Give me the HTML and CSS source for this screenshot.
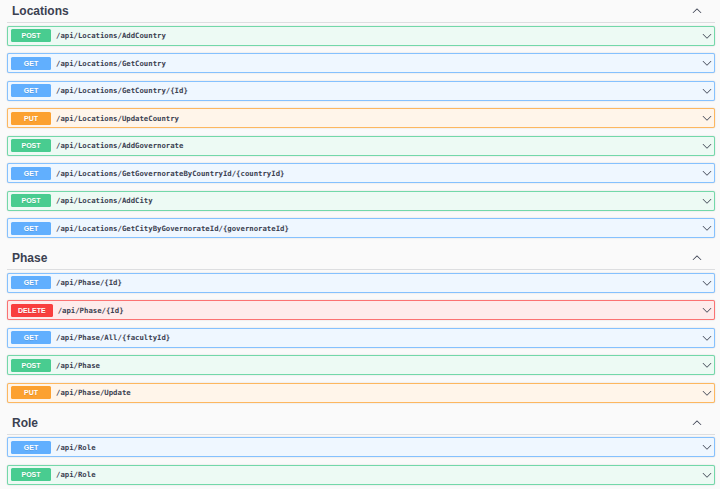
FILE: index.html
```html
<!DOCTYPE html>
<html>
<head>
<meta charset="utf-8">
<link rel="stylesheet" href="styles.css">
</head>
<body>
<div class="wrapper">
  <section class="tag-section">
    <h3 class="tag"><span class="tag-name">Locations</span><svg class="tag-arrow" viewBox="0 0 20 20"><path d="M17.418 13.891c.272.268.709.268.979 0s.271-.701 0-.969l-7.908-7.83c-.27-.268-.707-.268-.979 0l-7.908 7.83c-.27.268-.27.701 0 .969.271.268.709.268.979 0L10 6.75l7.418 7.141z"/></svg></h3>
    <div class="op op-post"><span class="method">POST</span><span class="path">/api/Locations/AddCountry</span><svg class="arrow" viewBox="0 0 20 20"><path d="M17.418 6.109c.272-.268.709-.268.979 0s.271.701 0 .969l-7.908 7.83c-.27.268-.707.268-.979 0l-7.908-7.83c-.27-.268-.27-.701 0-.969.271-.268.709-.268.979 0L10 13.25l7.418-7.141z"/></svg></div>
    <div class="op op-get"><span class="method">GET</span><span class="path">/api/Locations/GetCountry</span><svg class="arrow" viewBox="0 0 20 20"><path d="M17.418 6.109c.272-.268.709-.268.979 0s.271.701 0 .969l-7.908 7.83c-.27.268-.707.268-.979 0l-7.908-7.83c-.27-.268-.27-.701 0-.969.271-.268.709-.268.979 0L10 13.25l7.418-7.141z"/></svg></div>
    <div class="op op-get"><span class="method">GET</span><span class="path">/api/Locations/GetCountry/{Id}</span><svg class="arrow" viewBox="0 0 20 20"><path d="M17.418 6.109c.272-.268.709-.268.979 0s.271.701 0 .969l-7.908 7.83c-.27.268-.707.268-.979 0l-7.908-7.83c-.27-.268-.27-.701 0-.969.271-.268.709-.268.979 0L10 13.25l7.418-7.141z"/></svg></div>
    <div class="op op-put"><span class="method">PUT</span><span class="path">/api/Locations/UpdateCountry</span><svg class="arrow" viewBox="0 0 20 20"><path d="M17.418 6.109c.272-.268.709-.268.979 0s.271.701 0 .969l-7.908 7.83c-.27.268-.707.268-.979 0l-7.908-7.83c-.27-.268-.27-.701 0-.969.271-.268.709-.268.979 0L10 13.25l7.418-7.141z"/></svg></div>
    <div class="op op-post"><span class="method">POST</span><span class="path">/api/Locations/AddGovernorate</span><svg class="arrow" viewBox="0 0 20 20"><path d="M17.418 6.109c.272-.268.709-.268.979 0s.271.701 0 .969l-7.908 7.83c-.27.268-.707.268-.979 0l-7.908-7.83c-.27-.268-.27-.701 0-.969.271-.268.709-.268.979 0L10 13.25l7.418-7.141z"/></svg></div>
    <div class="op op-get"><span class="method">GET</span><span class="path">/api/Locations/GetGovernorateByCountryId/{countryId}</span><svg class="arrow" viewBox="0 0 20 20"><path d="M17.418 6.109c.272-.268.709-.268.979 0s.271.701 0 .969l-7.908 7.83c-.27.268-.707.268-.979 0l-7.908-7.83c-.27-.268-.27-.701 0-.969.271-.268.709-.268.979 0L10 13.25l7.418-7.141z"/></svg></div>
    <div class="op op-post"><span class="method">POST</span><span class="path">/api/Locations/AddCity</span><svg class="arrow" viewBox="0 0 20 20"><path d="M17.418 6.109c.272-.268.709-.268.979 0s.271.701 0 .969l-7.908 7.83c-.27.268-.707.268-.979 0l-7.908-7.83c-.27-.268-.27-.701 0-.969.271-.268.709-.268.979 0L10 13.25l7.418-7.141z"/></svg></div>
    <div class="op op-get"><span class="method">GET</span><span class="path">/api/Locations/GetCityByGovernorateId/{governorateId}</span><svg class="arrow" viewBox="0 0 20 20"><path d="M17.418 6.109c.272-.268.709-.268.979 0s.271.701 0 .969l-7.908 7.83c-.27.268-.707.268-.979 0l-7.908-7.83c-.27-.268-.27-.701 0-.969.271-.268.709-.268.979 0L10 13.25l7.418-7.141z"/></svg></div>
  </section>
  <section class="tag-section">
    <h3 class="tag"><span class="tag-name">Phase</span><svg class="tag-arrow" viewBox="0 0 20 20"><path d="M17.418 13.891c.272.268.709.268.979 0s.271-.701 0-.969l-7.908-7.83c-.27-.268-.707-.268-.979 0l-7.908 7.83c-.27.268-.27.701 0 .969.271.268.709.268.979 0L10 6.75l7.418 7.141z"/></svg></h3>
    <div class="op op-get"><span class="method">GET</span><span class="path">/api/Phase/{Id}</span><svg class="arrow" viewBox="0 0 20 20"><path d="M17.418 6.109c.272-.268.709-.268.979 0s.271.701 0 .969l-7.908 7.83c-.27.268-.707.268-.979 0l-7.908-7.83c-.27-.268-.27-.701 0-.969.271-.268.709-.268.979 0L10 13.25l7.418-7.141z"/></svg></div>
    <div class="op op-delete"><span class="method">DELETE</span><span class="path">/api/Phase/{Id}</span><svg class="arrow" viewBox="0 0 20 20"><path d="M17.418 6.109c.272-.268.709-.268.979 0s.271.701 0 .969l-7.908 7.83c-.27.268-.707.268-.979 0l-7.908-7.83c-.27-.268-.27-.701 0-.969.271-.268.709-.268.979 0L10 13.25l7.418-7.141z"/></svg></div>
    <div class="op op-get"><span class="method">GET</span><span class="path">/api/Phase/All/{facultyId}</span><svg class="arrow" viewBox="0 0 20 20"><path d="M17.418 6.109c.272-.268.709-.268.979 0s.271.701 0 .969l-7.908 7.83c-.27.268-.707.268-.979 0l-7.908-7.83c-.27-.268-.27-.701 0-.969.271-.268.709-.268.979 0L10 13.25l7.418-7.141z"/></svg></div>
    <div class="op op-post"><span class="method">POST</span><span class="path">/api/Phase</span><svg class="arrow" viewBox="0 0 20 20"><path d="M17.418 6.109c.272-.268.709-.268.979 0s.271.701 0 .969l-7.908 7.83c-.27.268-.707.268-.979 0l-7.908-7.83c-.27-.268-.27-.701 0-.969.271-.268.709-.268.979 0L10 13.25l7.418-7.141z"/></svg></div>
    <div class="op op-put"><span class="method">PUT</span><span class="path">/api/Phase/Update</span><svg class="arrow" viewBox="0 0 20 20"><path d="M17.418 6.109c.272-.268.709-.268.979 0s.271.701 0 .969l-7.908 7.83c-.27.268-.707.268-.979 0l-7.908-7.83c-.27-.268-.27-.701 0-.969.271-.268.709-.268.979 0L10 13.25l7.418-7.141z"/></svg></div>
  </section>
  <section class="tag-section">
    <h3 class="tag"><span class="tag-name">Role</span><svg class="tag-arrow" viewBox="0 0 20 20"><path d="M17.418 13.891c.272.268.709.268.979 0s.271-.701 0-.969l-7.908-7.83c-.27-.268-.707-.268-.979 0l-7.908 7.83c-.27.268-.27.701 0 .969.271.268.709.268.979 0L10 6.75l7.418 7.141z"/></svg></h3>
    <div class="op op-get"><span class="method">GET</span><span class="path">/api/Role</span><svg class="arrow" viewBox="0 0 20 20"><path d="M17.418 6.109c.272-.268.709-.268.979 0s.271.701 0 .969l-7.908 7.83c-.27.268-.707.268-.979 0l-7.908-7.83c-.27-.268-.27-.701 0-.969.271-.268.709-.268.979 0L10 13.25l7.418-7.141z"/></svg></div>
    <div class="op op-post"><span class="method">POST</span><span class="path">/api/Role</span><svg class="arrow" viewBox="0 0 20 20"><path d="M17.418 6.109c.272-.268.709-.268.979 0s.271.701 0 .969l-7.908 7.83c-.27.268-.707.268-.979 0l-7.908-7.83c-.27-.268-.27-.701 0-.969.271-.268.709-.268.979 0L10 13.25l7.418-7.141z"/></svg></div>
  </section>
</div>
</body>
</html>
```

FILE: styles.css
```css
html, body {
  margin: 0;
  padding: 0;
  background: #fafafa;
}
body {
  font-family: "Liberation Sans", Arial, sans-serif;
  color: #3b4151;
  overflow: hidden;
}
.wrapper {
  padding: 0 5px 0 7px;
}
.tag-section {
  padding-bottom: 1.5px;
}
.tag {
  display: flex;
  align-items: center;
  margin: 0 0 2.5px;
  padding: 4px 13px 4px 5px;
  height: 14px;
  line-height: 14px;
  border-bottom: 1px solid rgba(59, 65, 81, 0.15);
  font-size: 12px;
  font-weight: 700;
  color: #3b4151;
}
.tag-name {
  flex: 1;
}
.tag-arrow {
  width: 10px;
  height: 10px;
  fill: #3b4151;
}
.op {
  display: flex;
  align-items: center;
  height: 18px;
  padding: 0 2.5px;
  margin: 0 0 7.5px;
  border: 1px solid;
  border-radius: 2px;
  box-shadow: 0 0 1.5px rgba(0, 0, 0, 0.19);
}
.method {
  box-sizing: border-box;
  min-width: 40px;
  height: 13px;
  line-height: 13px;
  padding: 0 7px;
  margin-left: 0.5px;
  border-radius: 1.5px;
  text-align: center;
  font-size: 7px;
  font-weight: 700;
  color: #fff;
  text-shadow: 0 0.5px 0 rgba(0, 0, 0, 0.1);
}
.path {
  flex: 1;
  padding-left: 5px;
  font-family: "DejaVu Sans Mono", "Liberation Mono", monospace;
  font-size: 7.3px;
  font-weight: 700;
  color: #3b4151;
}
.arrow {
  width: 10px;
  height: 10px;
  fill: #3b4151;
}
.op-post { background: #edfaf4; border-color: rgba(73, 204, 144, 0.75); }
.op-post .method { background: #49cc90; }
.op-get { background: #eff7ff; border-color: rgba(97, 175, 254, 0.75); }
.op-get .method { background: #61affe; }
.op-put { background: #fff5ea; border-color: rgba(252, 161, 48, 0.75); }
.op-put .method { background: #fca130; }
.op-delete { background: #feebeb; border-color: rgba(249, 62, 62, 0.7); }
.op-delete .method { background: #f93e3e; }
```
